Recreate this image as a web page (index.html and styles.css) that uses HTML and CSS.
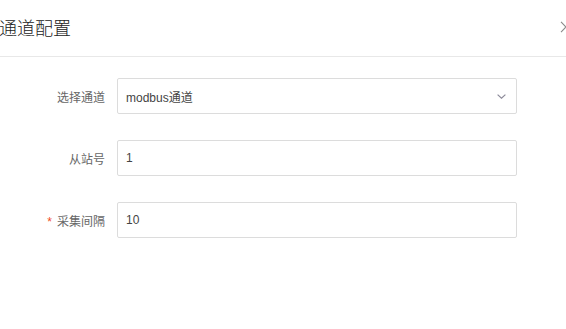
FILE: index.html
```html
<!DOCTYPE html>
<html lang="zh-CN">
<head>
<meta charset="utf-8">
<title>通道配置</title>
<link rel="stylesheet" href="styles.css">
</head>
<body>
<div class="drawer">
  <div class="drawer-header">
    <div class="drawer-title">通道配置</div>
    <span class="drawer-close">
      <svg width="7" height="12" viewBox="0 0 7 12"><path d="M1 0.8 L6 6 L1 11.2" fill="none" stroke="#8a8a8a" stroke-width="1.1"/></svg>
    </span>
  </div>
  <form class="form">
    <div class="form-row">
      <label class="form-label">选择通道</label>
      <div class="form-control select">
        <span class="value">modbus通道</span>
        <svg class="arrow" width="9" height="5" viewBox="0 0 9 5"><path d="M0.6 0.6 L4.5 4.2 L8.4 0.6" fill="none" stroke="#8c8a99" stroke-width="1.2"/></svg>
      </div>
    </div>
    <div class="form-row">
      <label class="form-label">从站号</label>
      <div class="form-control"><span class="value">1</span></div>
    </div>
    <div class="form-row">
      <label class="form-label"><span class="req">*</span>采集间隔</label>
      <div class="form-control"><span class="value">10</span></div>
    </div>
  </form>
</div>
</body>
</html>
```
FILE: styles.css
```css
html, body {
  margin: 0;
  padding: 0;
  background: #fff;
}
body {
  width: 566px;
  height: 329px;
  overflow: hidden;
  font-family: "Noto Sans CJK SC", "Liberation Sans", sans-serif;
}
.drawer-header {
  height: 57px;
  border-bottom: 1px solid #e8e8e8;
  display: flex;
  align-items: center;
  justify-content: space-between;
  box-sizing: border-box;
}
.drawer-title {
  margin-left: -1px;
  font-size: 18px;
  font-weight: 300;
  color: #222;
  line-height: 24px;
  margin-top: -2px;
}
.drawer-close {
  display: flex;
  margin-right: -1px;
  margin-top: -2px;
}
.form {
  padding-top: 21px;
  display: flex;
  flex-direction: column;
  gap: 26px;
}
.form-row {
  display: flex;
  align-items: center;
}
.form-label {
  width: 105px;
  padding-right: 12px;
  text-align: right;
  font-size: 12px;
  color: #666;
  font-family: "Noto Sans CJK SC", sans-serif;
}
.req {
  color: #f04a1e;
  margin-right: 5px;
  font-family: "Liberation Sans", sans-serif;
}
.form-control {
  width: 400px;
  height: 36px;
  box-sizing: border-box;
  border: 1px solid #dcdcdc;
  border-radius: 2px;
  display: flex;
  align-items: center;
  padding: 0 8px;
  font-size: 12px;
  color: #444;
  font-family: "Liberation Sans", "Noto Sans CJK SC", sans-serif;
}
.select {
  justify-content: space-between;
  padding-right: 10px;
}
.arrow {
  display: block;
}
```
